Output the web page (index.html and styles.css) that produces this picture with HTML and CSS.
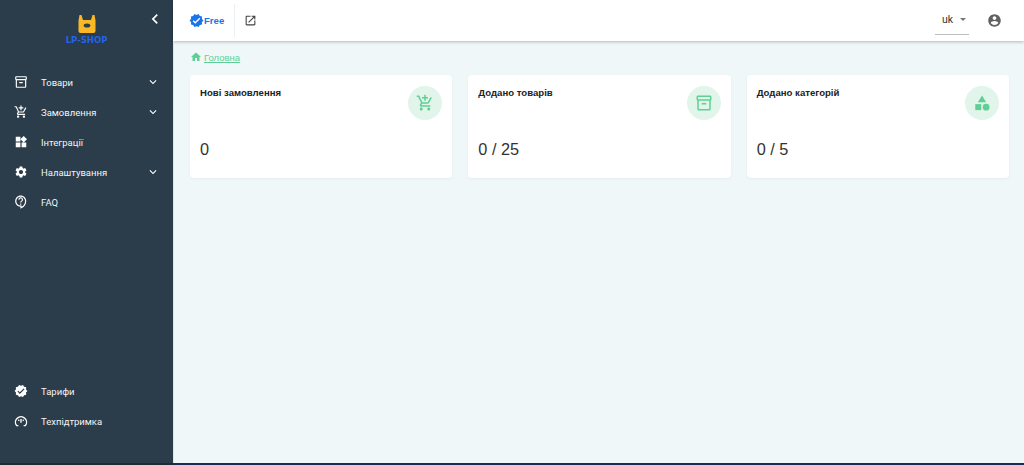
FILE: index.html
```html
<!DOCTYPE html>
<html lang="uk">
<head>
<meta charset="UTF-8">
<meta name="viewport" content="width=device-width, initial-scale=1.0">
<title>LP-Shop</title>
<link rel="stylesheet" href="styles.css">
</head>
<body>
<aside class="sidebar">
    <div class="brand">
        <div class="logo">
            <svg width="18" height="18" viewBox="0 0 18 18"><path fill="#fbb826" d="M1.5 0h2l1.5 5h8l1.5-5h2l1 5.5V16a2 2 0 0 1-2 2H2.500a2 2 0 0 1-2-2V5.500z"/><ellipse cx="9" cy="10.500" rx="3.300" ry="2" fill="#2b3c4a"/></svg>
            <span>LP-SHOP</span>
        </div>
        <svg class="collapse" width="20" height="20" viewBox="0 0 24 24"><path fill="#fff" d="M15.41 7.41L14 6l-6 6 6 6 1.41-1.41L10.83 12z"/></svg>
    </div>
    <nav class="menu">
        <a class="item"><svg class="ico" viewBox="0 0 24 24"><path d="M20 2H4c-1 0-2 .9-2 2v3.01c0 .72.43 1.34 1 1.69V20c0 1.1 1.1 2 2 2h14c.9 0 2-.9 2-2V8.7c.57-.35 1-.97 1-1.69V4c0-1.1-1-2-2-2zm-1 18H5V9h14v11zm1-13H4V4h16v3zM9 12h6v2H9z"/></svg><span>Товари</span><svg class="more" viewBox="0 0 24 24"><path d="M16.59 8.59L12 13.17 7.41 8.59 6 10l6 6 6-6z"/></svg></a>
        <a class="item"><svg class="ico" viewBox="0 0 24 24"><path d="M11 9h2V6h3V4h-3V1h-2v3H8v2h3v3zm-4 9c-1.1 0-1.99.9-1.99 2S5.9 22 7 22s2-.9 2-2-.9-2-2-2zm10 0c-1.1 0-1.99.9-1.99 2s.89 2 1.99 2 2-.9 2-2-.9-2-2-2zm-9.83-3.25l.03-.12.9-1.63h7.45c.75 0 1.41-.41 1.75-1.03l3.86-7.01L19.42 4h-.01l-1.1 2-2.76 5H8.53l-.13-.27L6.16 6l-.95-2-.94-2H1v2h2l3.6 7.59-1.35 2.45c-.16.28-.25.61-.25.96 0 1.1.9 2 2 2h12v-2H7.42c-.13 0-.25-.11-.25-.25z"/></svg><span>Замовлення</span><svg class="more" viewBox="0 0 24 24"><path d="M16.59 8.59L12 13.17 7.41 8.59 6 10l6 6 6-6z"/></svg></a>
        <a class="item"><svg class="ico" viewBox="0 0 24 24"><path d="M13 13v8h8v-8h-8zM3 21h8v-8H3v8zM3 3v8h8V3H3zm13.66-1.31L11 7.34 16.66 13l5.66-5.66-5.66-5.65z"/></svg><span>Інтеграції</span></a>
        <a class="item"><svg class="ico" viewBox="0 0 24 24"><path d="M19.14 12.94c.04-.3.06-.61.06-.94 0-.32-.02-.64-.07-.94l2.03-1.58c.18-.14.23-.41.12-.61l-1.92-3.32c-.12-.22-.37-.29-.59-.22l-2.39.96c-.5-.38-1.03-.7-1.62-.94l-.36-2.54c-.04-.24-.24-.41-.48-.41h-3.84c-.24 0-.43.17-.47.41l-.36 2.54c-.59.24-1.13.57-1.62.94l-2.39-.96c-.22-.08-.47 0-.59.22L2.74 8.87c-.12.21-.08.47.12.61l2.03 1.58c-.05.3-.09.63-.09.94s.02.64.07.94l-2.03 1.58c-.18.14-.23.41-.12.61l1.92 3.32c.12.22.37.29.59.22l2.39-.96c.5.38 1.03.7 1.62.94l.36 2.54c.05.24.24.41.48.41h3.84c.24 0 .44-.17.47-.41l.36-2.54c.59-.24 1.13-.56 1.62-.94l2.39.96c.22.08.47 0 .59-.22l1.92-3.32c.12-.22.07-.47-.12-.61l-2.01-1.58zM12 15.6c-1.98 0-3.6-1.62-3.6-3.6s1.62-3.6 3.6-3.6 3.6 1.62 3.6 3.6-1.62 3.6-3.6 3.6z"/></svg><span>Налаштування</span><svg class="more" viewBox="0 0 24 24"><path d="M16.59 8.59L12 13.17 7.41 8.59 6 10l6 6 6-6z"/></svg></a>
        <a class="item"><svg class="ico" viewBox="0 0 24 24"><path d="M11 23.59v-3.6c-5.01-.26-9-4.42-9-9.49C2 5.26 6.26 1 11.5 1S21 5.26 21 10.5c0 4.95-3.44 9.93-8.57 12.4L11 23.59zM11.5 3C7.36 3 4 6.36 4 10.5S7.36 18 11.5 18H13v2.3c3.64-2.3 6-6.08 6-9.8C19 6.36 15.64 3 11.5 3zm-1 11.5h2v2h-2zm2-1.5h-2c0-3.25 3-3 3-5 0-1.1-.9-2-2-2s-2 .9-2 2h-2c0-2.21 1.79-4 4-4s4 1.79 4 4c0 2.5-3 2.75-3 5z"/></svg><span>FAQ</span></a>
    </nav>
    <nav class="menu menu-bottom">
        <a class="item"><svg class="ico" viewBox="0 0 24 24"><path d="M23 12l-2.44-2.78.34-3.68-3.61-.82-1.89-3.18L12 3 8.6 1.54 6.71 4.72l-3.61.81.34 3.68L1 12l2.44 2.78-.34 3.69 3.61.82 1.89 3.18L12 21l3.4 1.46 1.89-3.18 3.61-.82-.34-3.68L23 12zm-13 5l-4-4 1.41-1.41L10 14.17l6.59-6.59L18 9l-8 8z"/></svg><span>Тарифи</span></a>
        <a class="item"><svg class="ico gauge" viewBox="0 0 24 24"><path d="M7.500 20H4.500a9.500 9.500 0 1 1 15 0H16.500"/><path d="M12 8.500V15M7.500 10l1.500 1.500M16.500 10L15 11.500"/></svg><span>Техпідтримка</span></a>
    </nav>
</aside>

<div class="page">
    <header class="topbar">
        <div class="plan">
            <svg width="15" height="15" viewBox="0 0 24 24"><path fill="#1a73e8" d="M23 12l-2.44-2.78.34-3.68-3.61-.82-1.89-3.18L12 3 8.6 1.54 6.71 4.72l-3.61.81.34 3.68L1 12l2.44 2.78-.34 3.69 3.61.82 1.89 3.18L12 21l3.4 1.46 1.89-3.18 3.61-.82-.34-3.68L23 12zm-13 5l-4-4 1.41-1.41L10 14.17l6.59-6.59L18 9l-8 8z"/></svg>
            <span>Free</span>
        </div>
        <div class="open-link">
            <svg width="13" height="13" viewBox="0 0 24 24"><path fill="#424242" d="M19 19H5V5h7V3H5c-1.11 0-2 .9-2 2v14c0 1.1.89 2 2 2h14c1.1 0 2-.9 2-2v-7h-2v7zM14 3v2h3.59l-9.83 9.83 1.41 1.41L19 6.41V10h2V3h-7z"/></svg>
        </div>
        <div class="top-right">
            <div class="lang"><span>uk</span><i class="caret"></i></div>
            <svg class="account" width="15" height="15" viewBox="0 0 24 24"><path fill="#616161" d="M12 2C6.48 2 2 6.48 2 12s4.48 10 10 10 10-4.48 10-10S17.52 2 12 2zm0 3c1.66 0 3 1.34 3 3s-1.34 3-3 3-3-1.34-3-3 1.34-3 3-3zm0 14.2c-2.5 0-4.71-1.28-6-3.22.03-1.99 4-3.08 6-3.08 1.99 0 5.97 1.09 6 3.08-1.29 1.94-3.5 3.22-6 3.22z"/></svg>
        </div>
    </header>

    <main class="content">
        <div class="crumbs">
            <svg width="12" height="12" viewBox="0 0 24 24"><path fill="#5fcf95" d="M10 20v-6h4v6h5v-8h3L12 3 2 12h3v8z"/></svg>
            <a>Головна</a>
        </div>
        <section class="cards">
            <article class="card">
                <div class="card-top">
                    <h3>Нові замовлення</h3>
                    <div class="badge"><svg viewBox="0 0 24 24"><path d="M11 9h2V6h3V4h-3V1h-2v3H8v2h3v3zm-4 9c-1.1 0-1.99.9-1.99 2S5.9 22 7 22s2-.9 2-2-.9-2-2-2zm10 0c-1.1 0-1.99.9-1.99 2s.89 2 1.99 2 2-.9 2-2-.9-2-2-2zm-9.83-3.25l.03-.12.9-1.63h7.45c.75 0 1.41-.41 1.75-1.03l3.86-7.01L19.42 4h-.01l-1.1 2-2.76 5H8.53l-.13-.27L6.16 6l-.95-2-.94-2H1v2h2l3.6 7.59-1.35 2.45c-.16.28-.25.61-.25.96 0 1.1.9 2 2 2h12v-2H7.42c-.13 0-.25-.11-.25-.25z"/></svg></div>
                </div>
                <p class="count">0</p>
            </article>
            <article class="card">
                <div class="card-top">
                    <h3>Додано товарів</h3>
                    <div class="badge"><svg viewBox="0 0 24 24"><path d="M20 2H4c-1 0-2 .9-2 2v3.01c0 .72.43 1.34 1 1.69V20c0 1.1 1.1 2 2 2h14c.9 0 2-.9 2-2V8.7c.57-.35 1-.97 1-1.69V4c0-1.1-1-2-2-2zm-1 18H5V9h14v11zm1-13H4V4h16v3zM9 12h6v2H9z"/></svg></div>
                </div>
                <p class="count">0 / 25</p>
            </article>
            <article class="card">
                <div class="card-top">
                    <h3>Додано категорій</h3>
                    <div class="badge"><svg viewBox="0 0 24 24"><path d="M12 2l-5.5 9h11z"/><circle cx="17.500" cy="17.500" r="4.500"/><path d="M3 13.500h8v8H3z"/></svg></div>
                </div>
                <p class="count">0 / 5</p>
            </article>
        </section>
    </main>
</div>
</body>
</html>
```

FILE: styles.css
```css
:root{
    --side:#2b3c4a;
    --bg:#f0f7f9;
    --green:#5fcf95;
    --green-soft:#e1f5ea;
    --text:#222;
}
*{box-sizing:border-box;margin:0;padding:0;}
html,body{height:100%;}
body{
    display:flex;
    height:465px;
    overflow:hidden;
    font-family:'Liberation Sans',Arial,sans-serif;
    background:var(--bg);
    color:var(--text);
}
.sidebar{
    width:173px;
    flex:none;
    display:flex;
    flex-direction:column;
    background:var(--side);
    border-bottom:2px solid #1f2a33;
}
.brand{
    height:67px;
    display:flex;
    justify-content:center;
    padding-top:15px;
    position:relative;
}
.logo{
    display:flex;
    flex-direction:column;
    align-items:center;
}
.logo span{
    font-family:'DejaVu Sans',sans-serif;
    font-weight:700;
    font-size:8.5px;
    line-height:10px;
    margin-top:2px;
    color:#2563eb;
}
.collapse{
    position:absolute;
    top:9px;
    right:8px;
}
.menu{display:flex;flex-direction:column;}
.menu-bottom{margin-top:auto;margin-bottom:27px;}
.item{
    height:30px;
    display:flex;
    align-items:center;
    padding:0 13px 0 14px;
    color:#f2f5f7;
    font-family:Roboto,sans-serif;
    font-size:9.5px;
}
.item span{margin-left:13px;flex:1;}
.ico{width:14px;height:14px;fill:#fff;flex:none;}
.gauge{fill:none;stroke:#fff;stroke-width:2.400;}
.more{width:14px;height:14px;fill:#fff;flex:none;}
.page{
    flex:1;
    min-width:0;
    display:flex;
    flex-direction:column;
    border-bottom:2px solid #1c2a58;
}
.topbar{
    height:41px;
    flex:none;
    background:#fff;
    display:flex;
    align-items:center;
    box-shadow:0 1px 3px rgba(0,0,0,.25);
    padding:0 22px 1px 16px;
}
.plan{
    display:flex;
    align-items:center;
    height:33px;
    padding-right:10px;
    border-right:1px solid #eceff1;
    color:#1a73e8;
    font-size:9.6px;
    font-weight:700;
}
.open-link{display:flex;margin-left:9px;}
.top-right{
    margin-left:auto;
    display:flex;
    align-items:center;
    gap:18px;
}
.lang{
    width:34px;
    height:30px;
    padding:0 0 1px 7px;
    display:flex;
    align-items:center;
    gap:7px;
    border-bottom:1px solid #bdbdbd;
    font-family:Roboto,sans-serif;
    font-size:10.500px;
    color:#333;
}
.caret{
    border-left:3px solid transparent;
    border-right:3px solid transparent;
    border-top:3px solid #757575;
}
.content{
    flex:1;
    padding:9px 15px 0 16px;
    border-left:1px solid #dde5e9;
}
.crumbs{
    display:flex;
    align-items:center;
    gap:2px;
    height:14px;
}
.crumbs a{
    font-size:9.500px;
    color:var(--green);
    text-decoration:underline;
}
.cards{
    display:grid;
    grid-template-columns:repeat(3,1fr);
    gap:16px;
    margin-top:11px;
}
.card{
    background:#fff;
    border-radius:4px;
    height:103px;
    padding:12px 10px;
    box-shadow:0 1px 3px rgba(0,0,0,.05);
}
.card-top{
    display:flex;
    justify-content:space-between;
    align-items:flex-start;
}
.card h3{
    font-size:9.600px;
    font-weight:700;
    line-height:12px;
}
.badge{
    width:34px;
    height:34px;
    margin-top:-1px;
    border-radius:50%;
    background:var(--green-soft);
    display:flex;
    align-items:center;
    justify-content:center;
}
.badge svg{width:18px;height:18px;fill:var(--green);}
.count{
    margin-top:19px;
    font-size:16.300px;
    line-height:20px;
    color:#333;
}
```
